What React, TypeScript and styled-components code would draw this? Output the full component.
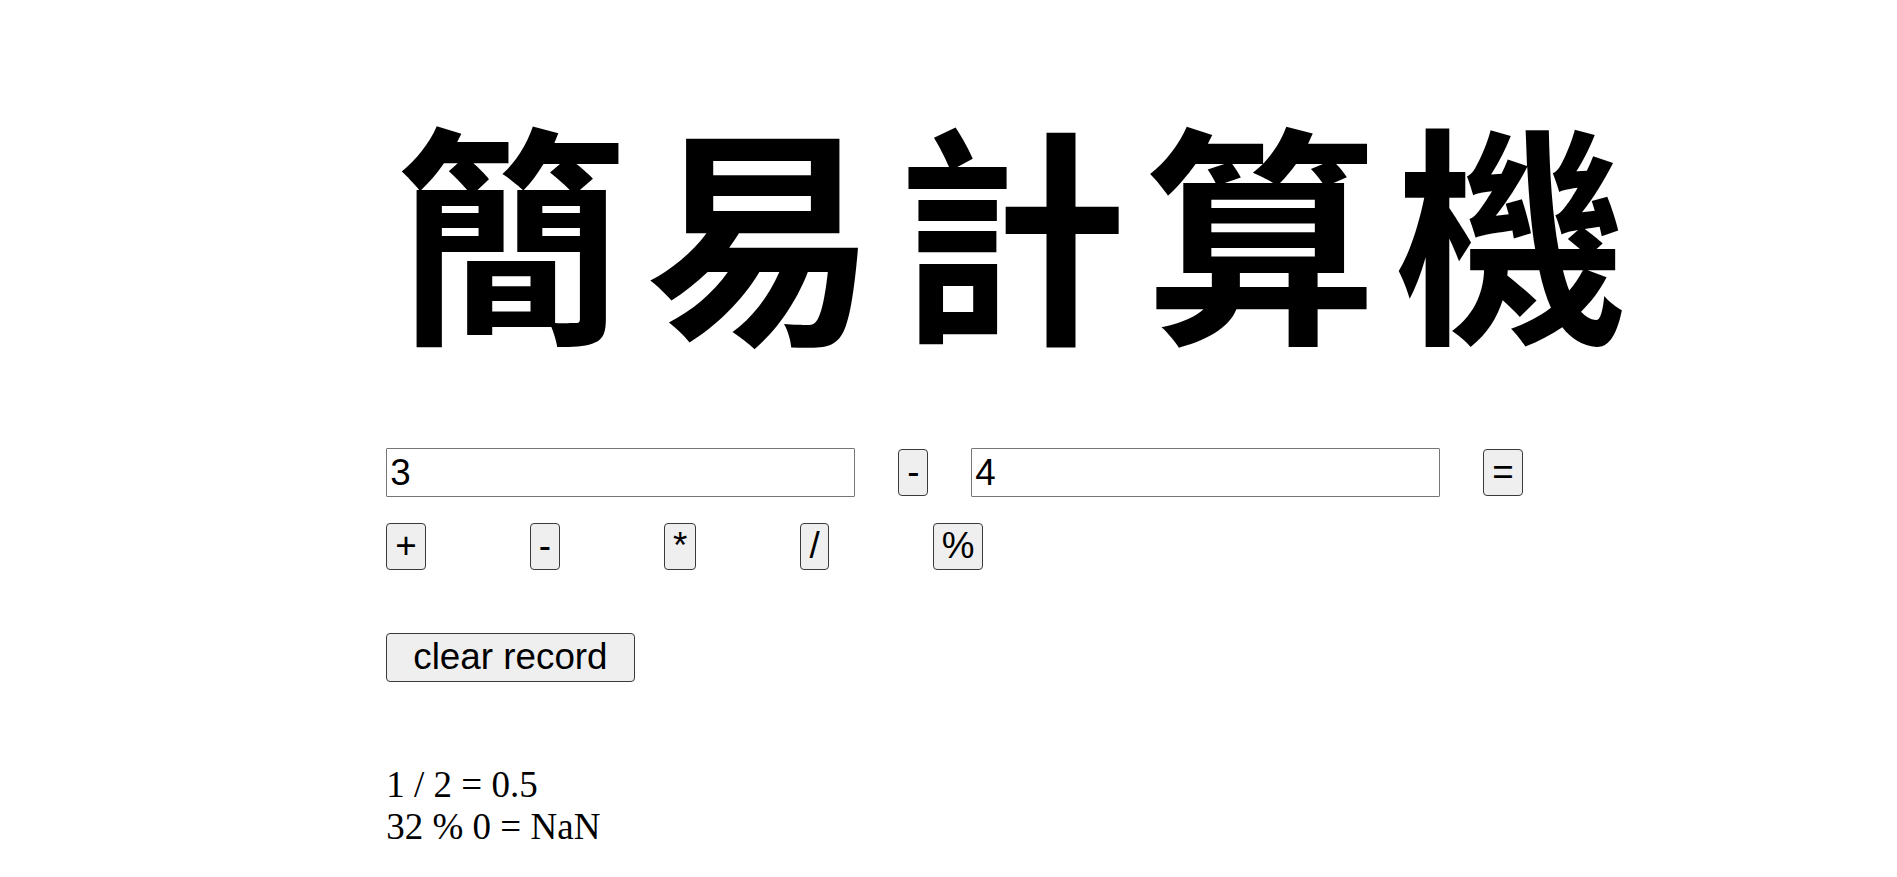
import React, { useState } from "react";
import styled, { createGlobalStyle } from "styled-components";

const GlobalStyle = createGlobalStyle`
  html, body { margin: 0; padding: 0; background: #ffffff; }
  body { font-family: "Liberation Serif", "Times New Roman", serif; color: #000; }
`;

const Page = styled.div`
  padding: 100px 0 40px 386.3px;
  display: flex;
  flex-direction: column;
  align-items: flex-start;
`;

const Title = styled.h1`
  margin: 0;
  font-family: "Noto Sans CJK TC", "Noto Sans CJK SC", sans-serif;
  font-weight: 600;
  font-size: 232px;
  line-height: 250px;
  white-space: nowrap;
  letter-spacing: 18px;
  padding-left: 9px;
`;

const Row = styled.div<{ $gap: number; $top: number }>`
  display: flex;
  align-items: center;
  gap: ${(p) => p.$gap}px;
  margin-top: ${(p) => p.$top}px;
`;

const NumInput = styled.input`
  box-sizing: border-box;
  width: 469px;
  height: 49px;
  padding: 0 3px;
  margin: 0;
  border: 1px solid #767676;
  border-radius: 1px;
  font-family: "Liberation Sans", Arial, sans-serif;
  font-size: 36.8px;
  color: #000;
  background: #fff;
  outline: none;
`;

const Btn = styled.button<{ $px?: number; $h?: number }>`
  appearance: none;
  box-sizing: border-box;
  margin: 0;
  height: ${(p) => p.$h ?? 47}px;
  padding: 0 ${(p) => p.$px ?? 8}px;
  border: 1px solid #3a3a3a;
  border-radius: 4px;
  background: #efefef;
  color: #000;
  font-family: "Liberation Sans", Arial, sans-serif;
  font-size: 36.8px;
  line-height: 1;
  cursor: pointer;
`;

const Records = styled.div`
  margin-top: 82px;
  font-family: "Liberation Serif", "Times New Roman", serif;
  font-size: 37px;
  line-height: 41.6px;
`;

const RecordLine = styled.div`
  white-space: pre;
`;

export default function App() {
  const [a, setA] = useState("3");
  const [b, setB] = useState("4");
  const [op] = useState("-");
  const records = ["1 / 2 = 0.5", "32 % 0 = NaN"];
  return (
    <>
      <GlobalStyle />
      <Page>
        <Title>簡易計算機</Title>
        <Row $gap={42.9} $top={98}>
          <NumInput value={a} onChange={(e) => setA(e.target.value)} />
          <Btn>{op}</Btn>
          <NumInput value={b} onChange={(e) => setB(e.target.value)} />
          <Btn>=</Btn>
        </Row>
        <Row $gap={104} $top={26}>
          <Btn>+</Btn>
          <Btn>-</Btn>
          <Btn>*</Btn>
          <Btn>/</Btn>
          <Btn>%</Btn>
        </Row>
        <Row $gap={0} $top={63}>
          <Btn $px={26} $h={49}>clear record</Btn>
        </Row>
        <Records>
          {records.map((r) => (
            <RecordLine key={r}>{r}</RecordLine>
          ))}
        </Records>
      </Page>
    </>
  );
}
